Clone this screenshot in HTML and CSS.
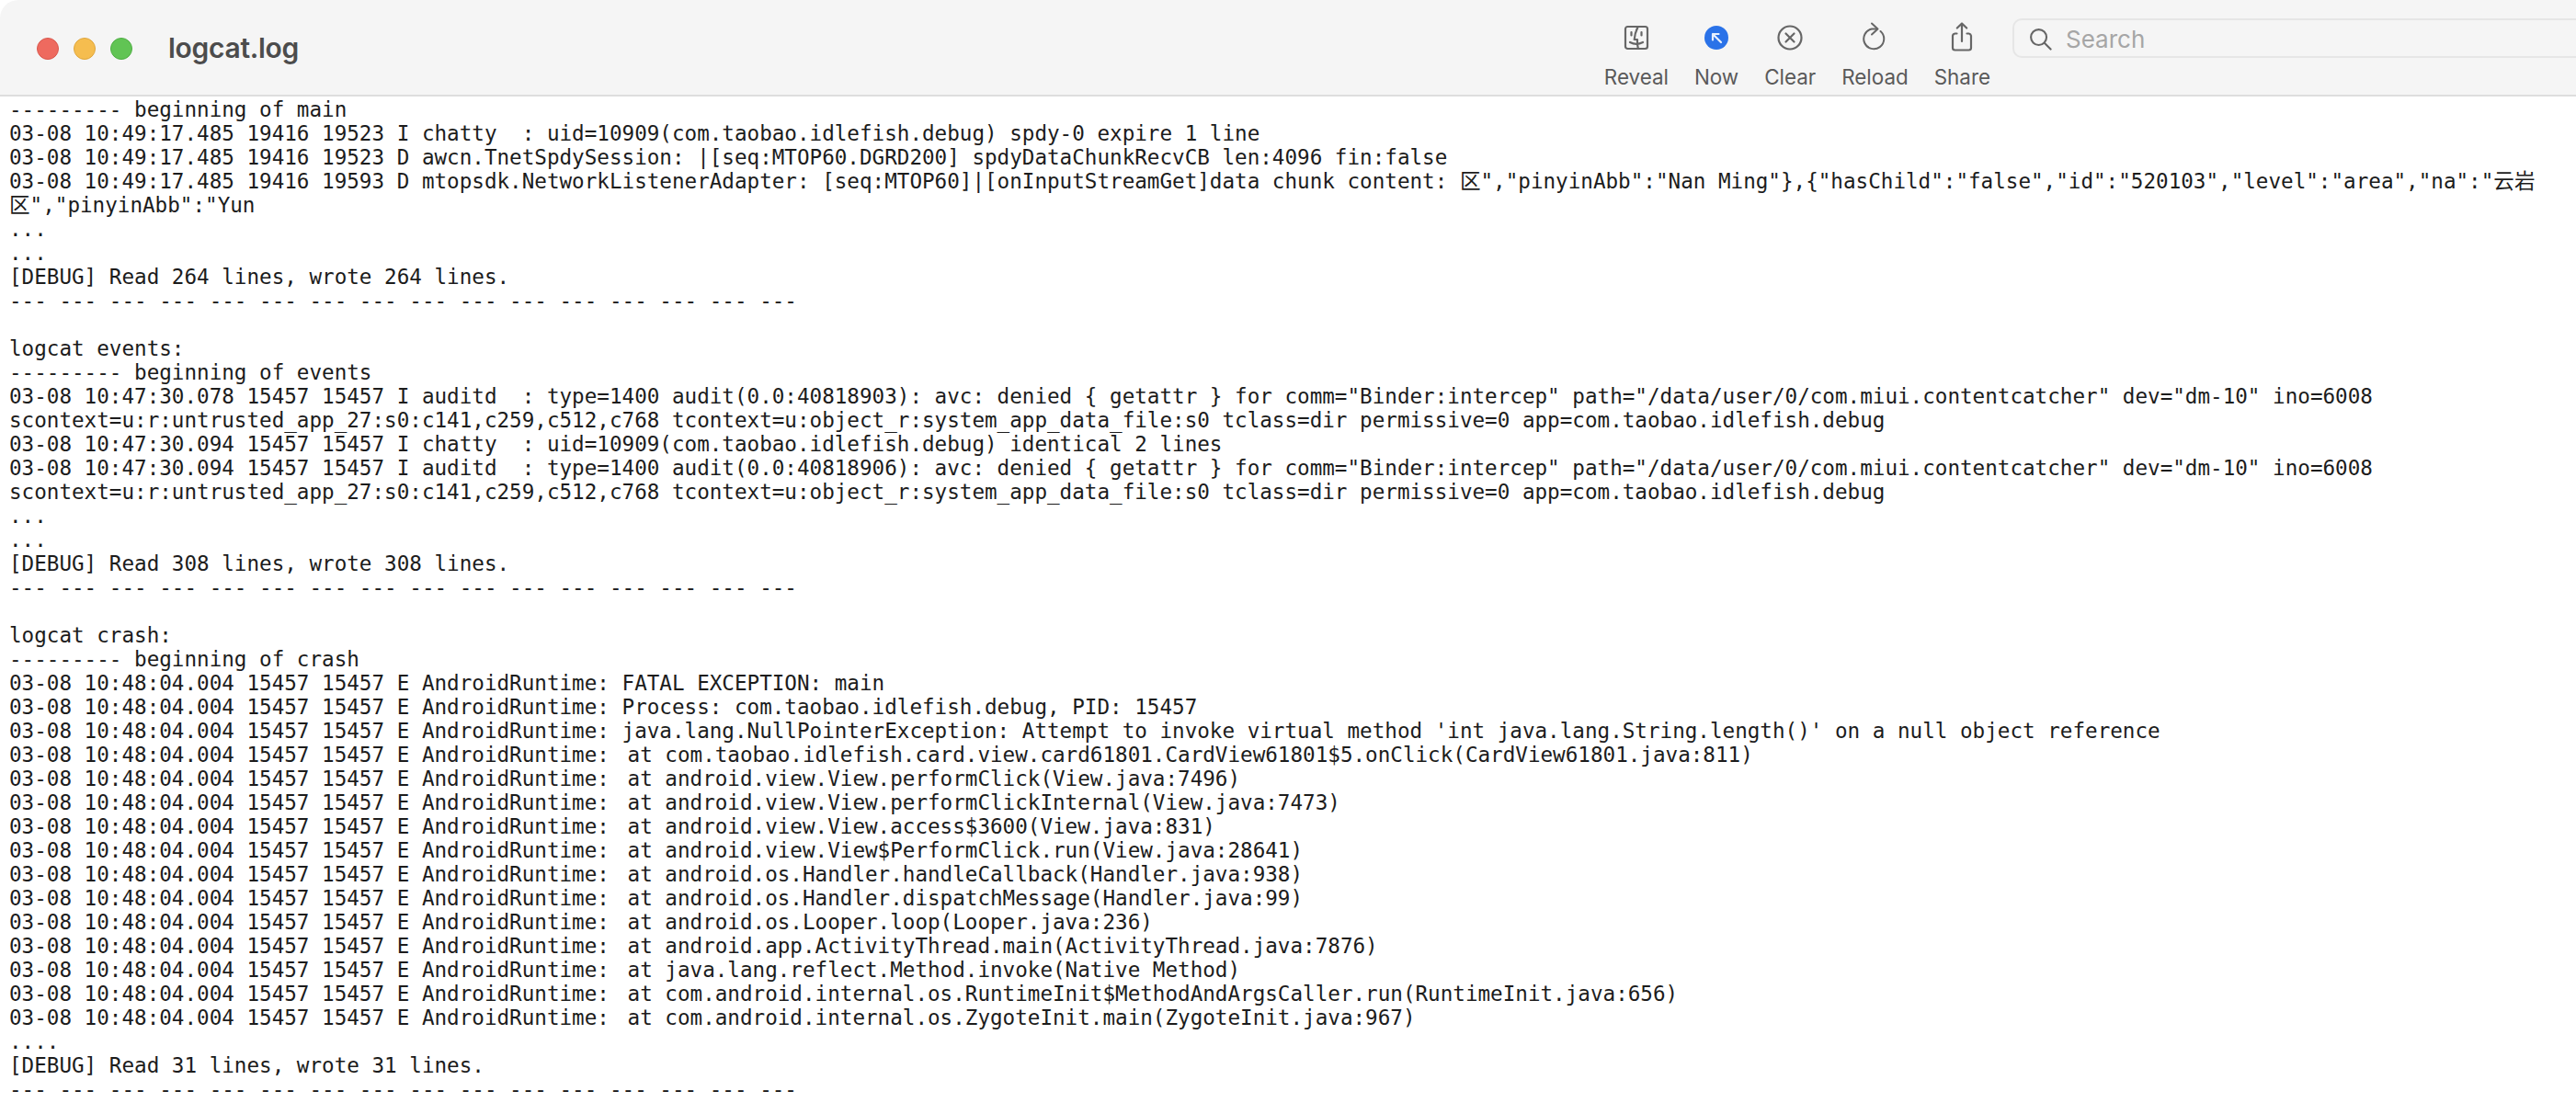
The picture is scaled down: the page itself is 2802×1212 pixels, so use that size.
FILE: index.html
```html
<!DOCTYPE html>
<html lang="en">
<head>
<meta charset="utf-8">
<title>logcat.log</title>
<link rel="stylesheet" href="styles.css">
</head>
<body>
<div class="window">
<header class="toolbar">
  <div class="lights"><span class="light red"></span><span class="light yellow"></span><span class="light green"></span></div>
  <div class="title">logcat.log</div>
  <div class="spacer"></div>
  <div class="tools">
    <div class="tool">
      <svg class="icon" viewBox="0 0 36 36" fill="none" stroke="#666" stroke-width="2.2" stroke-linecap="round" stroke-linejoin="round"><rect x="6" y="6" width="24" height="24" rx="2.5"/><path d="M19.5 6.5c-2.5 5-3.5 9-3.8 13.5h3.3c-.2 3 .1 6.5.8 9.500"/><path d="M12.500 12v3.500M23.500 12v3.500"/><path d="M11 23c4.500 2.500 9.500 2.500 14 0"/></svg>
      <span class="label">Reveal</span>
    </div>
    <div class="tool">
      <svg class="icon" viewBox="0 0 36 36"><circle cx="18" cy="18" r="13" fill="#2a72e8"/><path d="M14 14h6.500M14 14v6.500M14 14l9 9" fill="none" stroke="#e8f0fd" stroke-width="2.200" stroke-linecap="round"/></svg>
      <span class="label">Now</span>
    </div>
    <div class="tool">
      <svg class="icon" viewBox="0 0 36 36" fill="none" stroke="#666" stroke-width="2.200" stroke-linecap="round"><circle cx="18" cy="18" r="12.500"/><path d="M13.500 13.500l9 9M22.500 13.500l-9 9"/></svg>
      <span class="label">Clear</span>
    </div>
    <div class="tool">
      <svg class="icon" viewBox="0 0 36 36" fill="none" stroke="#666" stroke-width="2" stroke-linecap="round" stroke-linejoin="round"><path d="M24.500 11a11 11 0 1 1-9.500-2.500h5"/><path d="M15 2.500l6.500 6-6.500 6"/></svg>
      <span class="label">Reload</span>
    </div>
    <div class="tool">
      <svg class="icon" viewBox="0 0 36 36" fill="none" stroke="#666" stroke-width="2.200" stroke-linecap="round" stroke-linejoin="round"><path d="M12.500 13.500h-2a3 3 0 0 0-2.500 2.500v13a2.500 2.500 0 0 0 2.500 2.500h15a2.500 2.500 0 0 0 2.500-2.500v-13a3 3 0 0 0-2.500-2.500h-2"/><path d="M18 22V2.500M12.800 7.500L18 2.500l5.200 5"/></svg>
      <span class="label">Share</span>
    </div>
  </div>
  <div class="search">
    <svg class="glass" viewBox="0 0 26 26" fill="none" stroke="#666" stroke-width="2.200" stroke-linecap="round"><circle cx="11" cy="11" r="8.800"/><path d="M17.500 17.500l7 7"/></svg>
    <span class="placeholder">Search</span>
  </div>
</header>
<pre class="log">--------- beginning of main
03-08 10:49:17.485 19416 19523 I chatty  : uid=10909(com.taobao.idlefish.debug) spdy-0 expire 1 line
03-08 10:49:17.485 19416 19523 D awcn.TnetSpdySession: |[seq:MTOP60.DGRD200] spdyDataChunkRecvCB len:4096 fin:false
03-08 10:49:17.485 19416 19593 D mtopsdk.NetworkListenerAdapter: [seq:MTOP60]|[onInputStreamGet]data chunk content: 区","pinyinAbb":"Nan Ming"},{"hasChild":"false","id":"520103","level":"area","na":"云岩
区","pinyinAbb":"Yun
...
...
[DEBUG] Read 264 lines, wrote 264 lines.
--- --- --- --- --- --- --- --- --- --- --- --- --- --- --- ---

logcat events:
--------- beginning of events
03-08 10:47:30.078 15457 15457 I auditd  : type=1400 audit(0.0:40818903): avc: denied { getattr } for comm="Binder:intercep" path="/data/user/0/com.miui.contentcatcher" dev="dm-10" ino=6008
scontext=u:r:untrusted_app_27:s0:c141,c259,c512,c768 tcontext=u:object_r:system_app_data_file:s0 tclass=dir permissive=0 app=com.taobao.idlefish.debug
03-08 10:47:30.094 15457 15457 I chatty  : uid=10909(com.taobao.idlefish.debug) identical 2 lines
03-08 10:47:30.094 15457 15457 I auditd  : type=1400 audit(0.0:40818906): avc: denied { getattr } for comm="Binder:intercep" path="/data/user/0/com.miui.contentcatcher" dev="dm-10" ino=6008
scontext=u:r:untrusted_app_27:s0:c141,c259,c512,c768 tcontext=u:object_r:system_app_data_file:s0 tclass=dir permissive=0 app=com.taobao.idlefish.debug
...
...
[DEBUG] Read 308 lines, wrote 308 lines.
--- --- --- --- --- --- --- --- --- --- --- --- --- --- --- ---

logcat crash:
--------- beginning of crash
03-08 10:48:04.004 15457 15457 E AndroidRuntime: FATAL EXCEPTION: main
03-08 10:48:04.004 15457 15457 E AndroidRuntime: Process: com.taobao.idlefish.debug, PID: 15457
03-08 10:48:04.004 15457 15457 E AndroidRuntime: java.lang.NullPointerException: Attempt to invoke virtual method 'int java.lang.String.length()' on a null object reference
03-08 10:48:04.004 15457 15457 E AndroidRuntime: <span class="at">at com.taobao.idlefish.card.view.card61801.CardView61801$5.onClick(CardView61801.java:811)</span>
03-08 10:48:04.004 15457 15457 E AndroidRuntime: <span class="at">at android.view.View.performClick(View.java:7496)</span>
03-08 10:48:04.004 15457 15457 E AndroidRuntime: <span class="at">at android.view.View.performClickInternal(View.java:7473)</span>
03-08 10:48:04.004 15457 15457 E AndroidRuntime: <span class="at">at android.view.View.access$3600(View.java:831)</span>
03-08 10:48:04.004 15457 15457 E AndroidRuntime: <span class="at">at android.view.View$PerformClick.run(View.java:28641)</span>
03-08 10:48:04.004 15457 15457 E AndroidRuntime: <span class="at">at android.os.Handler.handleCallback(Handler.java:938)</span>
03-08 10:48:04.004 15457 15457 E AndroidRuntime: <span class="at">at android.os.Handler.dispatchMessage(Handler.java:99)</span>
03-08 10:48:04.004 15457 15457 E AndroidRuntime: <span class="at">at android.os.Looper.loop(Looper.java:236)</span>
03-08 10:48:04.004 15457 15457 E AndroidRuntime: <span class="at">at android.app.ActivityThread.main(ActivityThread.java:7876)</span>
03-08 10:48:04.004 15457 15457 E AndroidRuntime: <span class="at">at java.lang.reflect.Method.invoke(Native Method)</span>
03-08 10:48:04.004 15457 15457 E AndroidRuntime: <span class="at">at com.android.internal.os.RuntimeInit$MethodAndArgsCaller.run(RuntimeInit.java:656)</span>
03-08 10:48:04.004 15457 15457 E AndroidRuntime: <span class="at">at com.android.internal.os.ZygoteInit.main(ZygoteInit.java:967)</span>
....
[DEBUG] Read 31 lines, wrote 31 lines.
--- --- --- --- --- --- --- --- --- --- --- --- --- --- --- ---</pre>
</div>
</body>
</html>
```
FILE: styles.css
```css
* { box-sizing: border-box; }
html, body { margin: 0; height: 100%; overflow: hidden; background: #fff; }
.window { height: 1212px; display: flex; flex-direction: column; }
.toolbar {
  height: 105px;
  flex: none;
  display: flex;
  align-items: flex-start;
  background: #f5f5f5;
  border-bottom: 2px solid #dedede;
  border-top-left-radius: 20px;
  padding: 0 0 0 40px;
  font-family: Inter, "Liberation Sans", sans-serif;
}
.lights { display: flex; gap: 16px; margin-top: 41px; }
.light { width: 24px; height: 24px; border-radius: 50%; }
.red { background: #ee6a5f; border: 1px solid #d9584e; }
.yellow { background: #f5bd4f; border: 1px solid #dfa63c; }
.green { background: #61c454; border: 1px solid #4fae44; }
.title { margin: 34px 0 0 39px; font-size: 30px; line-height: 36px; font-weight: 600; color: #4c4c4c; letter-spacing: -0.3px; }
.spacer { flex: 1; }
.tools { display: flex; gap: 28px; padding-top: 23px; }
.tool { display: flex; flex-direction: column; align-items: center; gap: 12px; }
.icon { width: 36px; height: 36px; display: block; }
.label { font-size: 22.4px; line-height: 26px; color: #5a5a5a; }
.search {
  width: 613px;
  height: 43px;
  margin: 20px 0 0 24px;
  display: flex;
  align-items: center;
  gap: 15px;
  padding: 2px 0 0 16px;
  border: 2px solid #e6e6e6;
  border-right: none;
  border-radius: 10px 0 0 10px;
}
.glass { width: 25px; height: 25px; flex: none; }
.placeholder { font-size: 26px; line-height: 32px; color: #a6a6a6; }
.log {
  margin: 0;
  padding: 1px 0 0 10px;
  font-family: "DejaVu Sans Mono", "Noto Sans CJK SC", monospace;
  font-size: 22.6px;
  line-height: 26px;
  color: #1c1c1c;
  white-space: pre;
  overflow: hidden;
}
.at { padding-left: 6px; }
```
